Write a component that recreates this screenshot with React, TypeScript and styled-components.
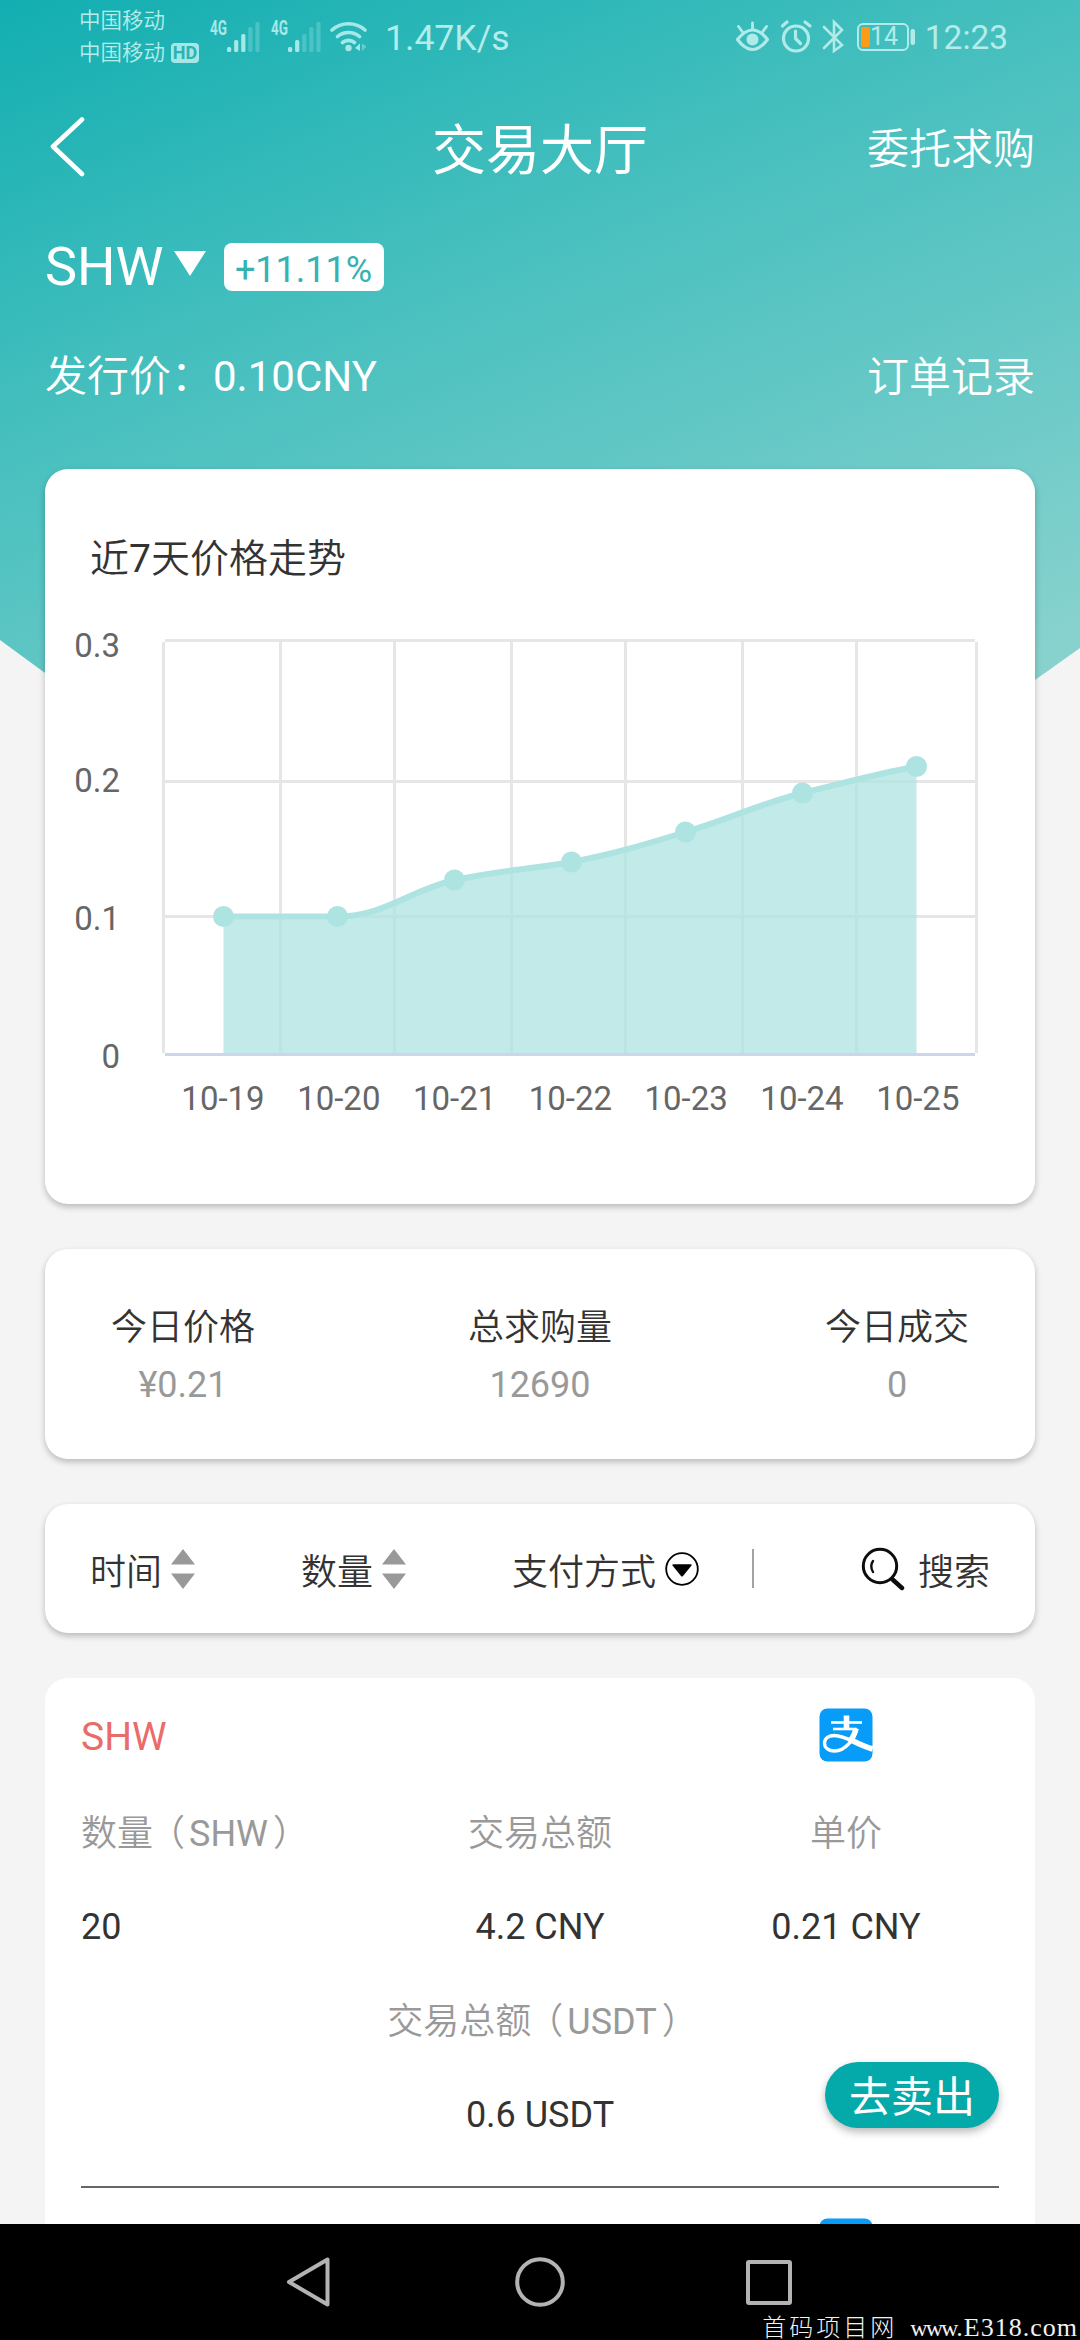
import React from "react";
import styled, { createGlobalStyle } from "styled-components";

const UI_FONT = `Roboto, "Noto Sans CJK SC DemiLight", "Noto Sans CJK SC Light", "Noto Sans CJK SC", sans-serif`;
const STRONG_FONT = `Roboto, "Noto Sans CJK SC", sans-serif`;

const GlobalStyle = createGlobalStyle`
  * { box-sizing: border-box; }
  body {
    margin: 0;
    background: #f4f4f4;
    font-family: ${UI_FONT};
    font-weight: 400;
    color: #333;
  }
  svg { display: block; flex: none; }
`;

const Screen = styled.div`
  width: 1080px;
  height: 2340px;
  display: flex;
  flex-direction: column;
  overflow: hidden;
  background: #f4f4f4;
`;

const Content = styled.div`
  position: relative;
  height: 2224px;
  overflow: hidden;
  padding: 0 45px;
`;

const Backdrop = styled.div`
  position: absolute;
  left: 0;
  top: 0;
  width: 1080px;
  height: 800px;
  background: linear-gradient(158deg, #12aeb1 0px, #45bfbe 400px, #88d2ce 1000px);
  clip-path: polygon(0 0, 1080px 0, 1080px 648px, 1035px 680px, 940px 740px, 140px 740px, 45px 673px, 0 640px);
`;

const Body = styled.div`
  position: relative;
`;

const StatusBar = styled.div`
  height: 72px;
  margin: 0 -45px;
  padding: 0 72px 0 79px;
  display: flex;
  justify-content: space-between;
  color: #b4ecea;
`;

const StatusGroup = styled.div`
  display: flex;
  align-items: center;
  height: 74px;
`;

const Carriers = styled.div`
  display: flex;
  flex-direction: column;
  width: 131px;
  font-size: 21.5px;
  font-weight: 300;
  line-height: 32px;
`;

const CarrierRow = styled.div`
  display: flex;
  align-items: center;
  gap: 6px;
`;

const HdBadge = styled.span`
  width: 28px;
  height: 20px;
  border-radius: 4px;
  background: #a6e7e6;
  color: #2ab4b6;
  font-weight: 700;
  font-size: 18px;
  line-height: 20px;
  text-align: center;
`;

const StatusText = styled.span<{ $gap: number; $size: number }>`
  margin-left: ${(p) => p.$gap}px;
  font-size: ${(p) => p.$size}px;
  line-height: 42px;
  padding-top: 1px;
`;

const NavRow = styled.div`
  height: 152px;
  display: grid;
  grid-template-columns: 1fr auto 1fr;
  align-items: center;
  color: #fff;
`;

const PageTitle = styled.h1`
  margin: 0;
  padding-top: 8px;
  font-family: ${STRONG_FONT};
  font-size: 54px;
  font-weight: 400;
  line-height: 80px;
`;

const HeaderLink = styled.span`
  justify-self: end;
  padding-top: 4px;
  font-size: 42px;
  line-height: 60px;
  color: #fff;
`;

const CoinRow = styled.div`
  height: 86px;
  display: flex;
  align-items: center;
  color: #fff;
`;

const CoinName = styled.span`
  font-size: 54px;
  line-height: 66px;
`;

const Caret = styled.span`
  margin: -8px 18px 0 10px;
  border-left: 16.5px solid transparent;
  border-right: 16.5px solid transparent;
  border-top: 25px solid #fff;
`;

const ChangeBadge = styled.span`
  width: 160px;
  height: 48px;
  border-radius: 8px;
  background: #fff;
  color: #35b2b1;
  font-size: 36px;
  line-height: 54px;
  text-align: center;
`;

const IssueRow = styled.div`
  height: 132px;
  display: flex;
  align-items: center;
  justify-content: space-between;
  font-size: 42px;
  color: #fff;
`;

const IssuePrice = styled.span`
  line-height: 60px;
  padding-top: 2px;
`;

const LightText = styled.span`
  font-weight: 300;
`;

const Stack = styled.div`
  margin-top: 27px;
  display: flex;
  flex-direction: column;
  gap: 45px;
`;

const Card = styled.section<{ $height: number; $flat?: boolean }>`
  height: ${(p) => p.$height}px;
  border-radius: 23px;
  background: #fff;
  box-shadow: ${(p) => (p.$flat ? "none" : "0 3px 6px rgba(0, 0, 0, 0.24)")};
`;

const ChartCard = styled(Card)`
  padding: 60px 0 0;
  display: flex;
  flex-direction: column;
  gap: 11px;
`;

const ChartTitle = styled.h2`
  margin: 0 45px;
  font-size: 39px;
  font-weight: 400;
  line-height: 60px;
`;

const StatsCard = styled(Card)`
  padding: 54px 66px 0;
  display: flex;
  justify-content: space-between;
`;

const Stat = styled.div`
  width: 144px;
  display: flex;
  flex-direction: column;
  align-items: center;
  font-size: 36px;
  line-height: 50px;
`;

const StatValue = styled.span`
  margin-top: 7px;
  color: #999;
`;

const FilterCard = styled(Card)`
  padding: 0 45px;
  display: flex;
  align-items: center;
  font-size: 36px;
  font-weight: 300;
  white-space: nowrap;
`;

const Filter = styled.div<{ $width?: number; $gap?: number }>`
  flex: none;
  width: ${(p) => (p.$width ? p.$width + "px" : "auto")};
  display: flex;
  align-items: center;
  gap: ${(p) => p.$gap || 9}px;
`;

const Divider = styled.span`
  flex: none;
  width: 2px;
  height: 39px;
  margin-right: 107px;
  background: #a3a3a3;
`;

const OrderCard = styled(Card)`
  padding: 0 36px;
`;

const OrderItem = styled.article`
  height: 510px;
  position: relative;
  border-bottom: 2px solid #666;
`;

const OrderRow = styled.div<{ $height: number }>`
  height: ${(p) => p.$height}px;
  display: grid;
  grid-template-columns: repeat(3, 306px);
  align-items: center;
  font-size: 36px;
  line-height: 48px;
`;

const Cell = styled.span<{ $tone?: "coin" | "muted"; $start?: boolean }>`
  display: flex;
  justify-content: ${(p) => (p.$start ? "flex-start" : "center")};
  padding-top: ${(p) => (p.$tone === "coin" ? 4 : p.$tone ? 2 : 0)}px;
  white-space: nowrap;
  font-size: ${(p) => (p.$tone === "coin" ? 39 : 36)}px;
  color: ${(p) => (p.$tone === "coin" ? "#e96b6b" : p.$tone === "muted" ? "#999" : "#333")};
`;

const Paren = styled.span<{ $shift: number }>`
  margin-left: ${(p) => p.$shift}px;
  margin-right: ${(p) => -p.$shift}px;
  font-weight: 300;
`;

const SellButton = styled.button`
  position: absolute;
  right: 0;
  bottom: 58px;
  width: 174px;
  height: 66px;
  padding: 5px 0 0;
  border: 0;
  border-radius: 33px;
  background: #04a9aa;
  color: #fff;
  font-family: ${STRONG_FONT};
  font-size: 42px;
  line-height: 61px;
  box-shadow: 0 4px 8px rgba(0, 0, 0, 0.28);
`;

const SystemNav = styled.nav`
  position: relative;
  height: 116px;
  background: #000;
  display: flex;
  align-items: flex-start;
  padding: 32px 0 0 286px;
`;

const Watermark = styled.span`
  position: absolute;
  right: 2px;
  bottom: 0;
  display: flex;
  align-items: baseline;
  color: #f2f2f2;
  font-family: "Liberation Serif", "Noto Sans CJK SC", serif;
  font-size: 26px;
  letter-spacing: 1px;
  line-height: 24px;
  white-space: pre;
`;

const WatermarkHost = styled.span`
  font-size: 24px;
  letter-spacing: -2px;
`;

const WatermarkName = styled.span`
  font-family: "Noto Sans CJK SC Light", "Noto Sans CJK SC", sans-serif;
  font-weight: 300;
  font-size: 24px;
  letter-spacing: 3px;
  margin-right: 13px;
`;

function Signal({ strong, gap }: { strong: number; gap: number }) {
  const tops = [47, 40, 34, 27, 22];
  return (
    <svg width="50" height="74" viewBox="0 0 50 74" style={{ marginLeft: gap }}>
      <text x="0" y="35" fontSize="20" fontWeight="700" textLength="17" lengthAdjust="spacingAndGlyphs" fill="#a6e8e7">4G</text>
      {tops.map((t, i) => (
        <rect key={i} x={17 + i * 7.1} y={t} width="4.2" height={52 - t} rx="1.6" fill="#a6e8e7" opacity={i < strong ? 1 : 0.3} />
      ))}
    </svg>
  );
}

function Wifi() {
  return (
    <svg width="38" height="74" viewBox="0 0 38 74" fill="none" stroke="#a6e8e7" strokeWidth="3.6" strokeLinecap="round" style={{ marginLeft: 9 }}>
      <path d="M2 30 A25 25 0 0 1 35 30" />
      <path d="M7.5 36.5 A17 17 0 0 1 29.5 36.5" />
      <path d="M12.5 42.5 A9.5 9.5 0 0 1 24.5 42.5" />
      <circle cx="18.5" cy="48" r="3.2" fill="#a6e8e7" stroke="none" />
      <path d="M25 48 L30 43.5 V51" strokeWidth="0" fill="#a6e8e7" />
      <path d="M32 43.5 V51 L36.5 46.5z" strokeWidth="0" fill="#a6e8e7" opacity="0.5" />
    </svg>
  );
}

function StatusIcons() {
  return (
    <svg width="182" height="74" viewBox="734 0 182 74" fill="none" stroke="#b0ebe9" strokeWidth="3.2" strokeLinecap="round" strokeLinejoin="round">
      <path d="M736.5 39.5 Q744 30 751.5 30 Q759 30 766.5 39.5 Q759 49.5 751.5 49.5 Q744 49.5 736.5 39.5z" />
      <circle cx="751.5" cy="39.5" r="6" fill="#b0ebe9" stroke="none" />
      <path d="M751.5 29 V23 M741.5 32 L737.5 26.5 M761.5 32 L765.5 26.5" strokeWidth="2.8" />
      <circle cx="795" cy="38.5" r="12.5" />
      <path d="M794.5 31 V38.5 L799.5 43.5" />
      <path d="M781.5 26 L786 22 M804 22 L809 26" />
      <path d="M823 27 L841 45 L833 51 V22 L841 30 L823 48" strokeWidth="2.6" strokeLinejoin="miter" />
      <rect x="857" y="24" width="50" height="26" rx="5" strokeWidth="2" />
      <rect x="860" y="27" width="9" height="20" rx="2" fill="#ff9a17" stroke="none" />
      <rect x="909.5" y="29" width="4.5" height="16" rx="2" fill="#b0ebe9" stroke="none" />
      <text x="883" y="45" textAnchor="middle" fontSize="25" fill="#b0ebe9" stroke="none">14</text>
    </svg>
  );
}

function BackIcon() {
  return (
    <svg width="40" height="62" viewBox="0 0 40 62" fill="none" stroke="#fff" strokeWidth="4.6" strokeLinecap="round" strokeLinejoin="round">
      <path d="M37 2.5 L8 29.500 L37 57" />
    </svg>
  );
}

const GRID_X = [163.5, 280.5, 394.5, 511.5, 625.5, 742.5, 856.5, 976.5];
const GRID_Y = [640.5, 781.5, 916.5];
const Y_LABELS: [string, number][] = [["0.3", 657], ["0.2", 792], ["0.1", 930], ["0", 1068]];
const POINTS = [
  { x: 223.5, y: 916.5, day: "10-19" },
  { x: 337.5, y: 916.5, day: "10-20" },
  { x: 454.5, y: 880, day: "10-21" },
  { x: 571.5, y: 862, day: "10-22" },
  { x: 685.5, y: 832, day: "10-23" },
  { x: 802.5, y: 793, day: "10-24" },
  { x: 916.5, y: 766.5, day: "10-25" },
];
const CURVE =
  "M223.5 916.5 L337.5 916.5 C384 916.5 408 891 454.5 880 C501 870 525 870 571.5 862 C617 853 640 846 685.5 832 C732 818 756 805 802.5 793 C848 782 871 775 916.5 766.5";

function PriceChart() {
  return (
    <svg width="990" height="520" viewBox="45 600 990 520">
      <g stroke="#e6e6e6" strokeWidth="3">
        {GRID_Y.map((y) => <path key={y} d={`M165 ${y} H975`} />)}
        {GRID_X.map((x) => <path key={x} d={`M${x} 642 V1053`} />)}
      </g>
      <path d="M165 1054.5 H975" stroke="#ccd6eb" strokeWidth="3" />
      <path d={`${CURVE} V1053 H223.5 Z`} fill="#ade3e1" opacity="0.75" />
      <path d={CURVE} fill="none" stroke="#ade3e1" strokeWidth="6" />
      {POINTS.map((p) => <circle key={p.day} cx={p.x} cy={p.y} r="10.5" fill="#ade3e1" />)}
      <g fill="#666" fontSize="33">
        {Y_LABELS.map(([t, y]) => <text key={t} x="120" y={y} textAnchor="end">{t}</text>)}
        {POINTS.map((p, i) => <text key={p.day} x={223 + i * 115.8} y="1110" textAnchor="middle">{p.day}</text>)}
      </g>
    </svg>
  );
}

function SortIcon() {
  return (
    <svg width="24" height="40" viewBox="0 0 24 40" fill="#999">
      <path d="M12 0 L24 15.5 H0z M0 24.5 H24 L12 40z" />
    </svg>
  );
}

function DropIcon() {
  return (
    <svg width="34" height="34" viewBox="0 0 34 34">
      <circle cx="17" cy="17" r="15.8" fill="none" stroke="#000" strokeWidth="1.8" />
      <path d="M7.5 13.5 Q7 12.3 8.5 12.3 H25.5 Q27 12.3 26.5 13.5 L18 24 Q17 25 16 24z" />
    </svg>
  );
}

function SearchIcon() {
  return (
    <svg width="44" height="44" viewBox="0 0 44 44" fill="none" stroke="#0d0d0d" strokeLinecap="round">
      <circle cx="19" cy="19" r="16.7" strokeWidth="3" />
      <path d="M12 14 Q8.500 19 12 25" strokeWidth="2.4" />
      <path d="M31 32 L41 41" strokeWidth="4.4" />
    </svg>
  );
}

function AlipayIcon() {
  return (
    <svg width="54" height="54" viewBox="0 0 54 54" fill="none" stroke="#fff">
      <rect x="0.5" y="0.5" width="53" height="53" rx="8" fill="#079cf8" stroke="none" />
      <path d="M12 14.5 H43" strokeWidth="2.6" />
      <path d="M27.5 7.5 V20.5" strokeWidth="5.6" />
      <path d="M14 21 H37.5" strokeWidth="2.6" />
      <path d="M38 20.5 C35 31 27 43 15.5 43 C8.5 43 5.5 39 5.5 35.5 C5.5 30 10 27.5 15.5 27.5 C25 27.5 38 36 53.5 40.5" strokeWidth="3.4" />
      <path d="M37 21 C35 28 33 31 30 34" strokeWidth="5.5" />
      <path d="M33 32.5 C40 36 47 39 53.5 41" strokeWidth="5.5" />
    </svg>
  );
}

const STATS = [
  { label: "今日价格", value: "¥0.21" },
  { label: "总求购量", value: "12690" },
  { label: "今日成交", value: "0" },
];

export default function App() {
  return (
    <Screen>
      <GlobalStyle />
      <Content>
        <Backdrop />
        <Body>
          <StatusBar>
            <StatusGroup>
              <Carriers>
                <CarrierRow>中国移动</CarrierRow>
                <CarrierRow>中国移动<HdBadge>HD</HdBadge></CarrierRow>
              </Carriers>
              <Signal strong={3} gap={0} />
              <Signal strong={2} gap={11} />
              <Wifi />
              <StatusText $gap={17} $size={35.6}>1.47K/s</StatusText>
            </StatusGroup>
            <StatusGroup>
              <StatusIcons />
              <StatusText $gap={8} $size={33.4}>12:23</StatusText>
            </StatusGroup>
          </StatusBar>
          <NavRow>
            <BackIcon />
            <PageTitle>交易大厅</PageTitle>
            <HeaderLink>委托求购</HeaderLink>
          </NavRow>
          <CoinRow>
            <CoinName>SHW</CoinName>
            <Caret />
            <ChangeBadge>+11.11%</ChangeBadge>
          </CoinRow>
          <IssueRow>
            <IssuePrice><LightText>发行价：</LightText>0.10CNY</IssuePrice>
            <HeaderLink>订单记录</HeaderLink>
          </IssueRow>
          <Stack>
            <ChartCard $height={735}>
              <ChartTitle>近7天价格走势</ChartTitle>
              <PriceChart />
            </ChartCard>
            <StatsCard $height={210}>
              {STATS.map((s) => (
                <Stat key={s.label}>
                  <LightText>{s.label}</LightText>
                  <StatValue>{s.value}</StatValue>
                </Stat>
              ))}
            </StatsCard>
            <FilterCard $height={129}>
              <Filter $width={211}>时间<SortIcon /></Filter>
              <Filter $width={211}>数量<SortIcon /></Filter>
              <Filter $width={240}>支付方式<DropIcon /></Filter>
              <Divider />
              <Filter $gap={13}><SearchIcon /><span>搜索</span></Filter>
            </FilterCard>
            <OrderCard $height={700} $flat>
              <OrderItem>
                <OrderRow $height={114}>
                  <Cell $tone="coin" $start>SHW</Cell>
                  <span />
                  <Cell><AlipayIcon /></Cell>
                </OrderRow>
                <OrderRow $height={82}>
                  <Cell $tone="muted" $start><LightText>数量</LightText><Paren $shift={-4}>（</Paren>SHW<Paren $shift={5}>）</Paren></Cell>
                  <Cell $tone="muted"><LightText>交易总额</LightText></Cell>
                  <Cell $tone="muted"><LightText>单价</LightText></Cell>
                </OrderRow>
                <OrderRow $height={106}>
                  <Cell $start>20</Cell>
                  <Cell>4.2 CNY</Cell>
                  <Cell>0.21 CNY</Cell>
                </OrderRow>
                <OrderRow $height={82}>
                  <span />
                  <Cell $tone="muted"><LightText>交易总额</LightText><Paren $shift={-4}>（</Paren>USDT<Paren $shift={5}>）</Paren></Cell>
                </OrderRow>
                <OrderRow $height={106}>
                  <span />
                  <Cell>0.6 USDT</Cell>
                </OrderRow>
                <SellButton>去卖出</SellButton>
              </OrderItem>
              <OrderRow $height={114}>
                <span />
                <span />
                <Cell><AlipayIcon /></Cell>
              </OrderRow>
            </OrderCard>
          </Stack>
        </Body>
      </Content>
      <SystemNav>
        <svg width="510" height="52" viewBox="286 2256 510 52" fill="none" stroke="#b3b3b3" strokeWidth="4" strokeLinejoin="round">
          <path d="M289 2282 L327.5 2259.5 V2304.5z" />
          <circle cx="540" cy="2282" r="22.8" />
          <rect x="748" y="2262" width="42" height="41" rx="1" />
        </svg>
        <Watermark>
          <WatermarkName>首码项目网</WatermarkName>
          <WatermarkHost>www</WatermarkHost>.E318.com
        </Watermark>
      </SystemNav>
    </Screen>
  );
}
